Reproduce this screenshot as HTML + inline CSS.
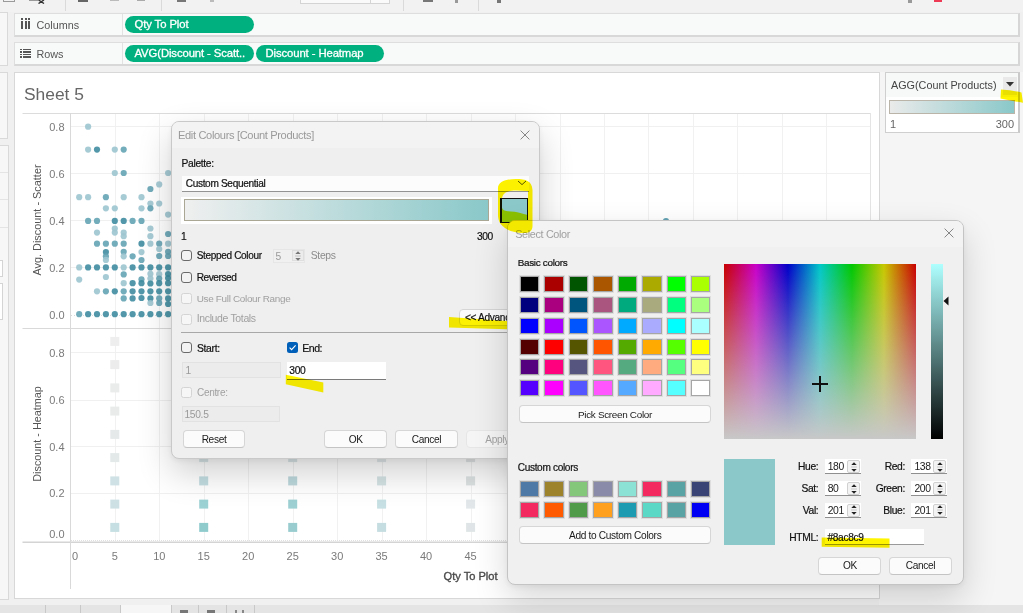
<!DOCTYPE html>
<html><head><meta charset="utf-8"><style>
html,body{margin:0;padding:0;width:1023px;height:613px;overflow:hidden;background:#f0f0f0;position:relative}
div{box-sizing:border-box}
</style></head><body>
<div style="position:absolute;left:0px;top:0px;width:1023px;height:12px;background:#f2f2f2"></div><div style="position:absolute;left:65px;top:0px;width:1px;height:11px;background:#dadada"></div><div style="position:absolute;left:161px;top:0px;width:1px;height:11px;background:#dadada"></div><div style="position:absolute;left:403px;top:0px;width:1px;height:11px;background:#dadada"></div><div style="position:absolute;left:478px;top:0px;width:1px;height:11px;background:#dadada"></div><div style="position:absolute;left:300px;top:0px;width:90px;height:4px;border:1px solid #d4d4d4;border-top:none;background:#fafafa;box-sizing:border-box"></div><div style="position:absolute;left:370px;top:0px;width:1px;height:4px;background:#d4d4d4"></div><div style="position:absolute;left:3px;top:0px;width:12px;height:2px;border:1px solid #9a9a9a;border-top:none;box-sizing:border-box"></div><div style="position:absolute;left:29px;top:0px;width:9px;height:1px;background:#999"></div><svg style="position:absolute;left:38px;top:0" width="7" height="4"><path d="M0.5 0L6 3.5M6 0L0.5 3.5" stroke="#333" stroke-width="1.4"/></svg><div style="position:absolute;left:78px;top:0px;width:10px;height:2px;background:#666"></div><div style="position:absolute;left:110px;top:0px;width:9px;height:1px;background:#bbb"></div><div style="position:absolute;left:137px;top:0px;width:8px;height:1px;background:#aaa"></div><div style="position:absolute;left:177px;top:0px;width:9px;height:2px;background:#777"></div><div style="position:absolute;left:210px;top:0px;width:4px;height:2px;background:#bbb"></div><div style="position:absolute;left:908px;top:0px;width:4px;height:3px;background:#999"></div><div style="position:absolute;left:934px;top:0px;width:8px;height:2px;background:#ef3a55"></div><div style="position:absolute;left:423px;top:0px;width:10px;height:2px;background:#777"></div><div style="position:absolute;left:455px;top:0px;width:3px;height:3px;background:#999"></div><div style="position:absolute;left:497px;top:0px;width:4px;height:3px;background:#777"></div><div style="position:absolute;left:0px;top:12px;width:1023px;height:60px;background:#f0f0f0"></div><div style="position:absolute;left:0px;top:12px;width:8px;height:54px;background:#f7f7f7;border:1px solid #d9d9d9;border-left:none;box-sizing:border-box"></div><div style="position:absolute;left:0px;top:72px;width:8px;height:67px;background:#f7f7f7;border:1px solid #d9d9d9;border-left:none;box-sizing:border-box"></div><div style="position:absolute;left:0px;top:145px;width:8.5px;height:455px;background:#f7f7f7;border:1px solid #d9d9d9;border-left:none;box-sizing:border-box"></div><div style="position:absolute;left:0px;top:172px;width:8px;height:1px;background:#e4e4e4"></div><div style="position:absolute;left:0px;top:199px;width:8px;height:1px;background:#e4e4e4"></div><div style="position:absolute;left:0px;top:227px;width:8px;height:1px;background:#e4e4e4"></div><div style="position:absolute;left:0px;top:260px;width:3px;height:17px;background:#fff;border:1px solid #d4d4d4;border-left:none;box-sizing:border-box"></div><div style="position:absolute;left:0px;top:283px;width:3px;height:37px;background:#fff;border:1px solid #d4d4d4;border-left:none;box-sizing:border-box"></div><div style="position:absolute;left:14px;top:13px;width:1005.5px;height:24px;background:#f8f9f9;border:1px solid #dedede;border-right:2px solid #d6d6d6;border-bottom:2px solid #d8d8d8;box-sizing:border-box"></div><div style="position:absolute;left:122px;top:14px;width:1px;height:21px;background:#e2e2e2"></div><div style="position:absolute;left:36.5px;top:18.8px;white-space:nowrap;font-family:'Liberation Sans', sans-serif;font-size:10.8px;color:#555;line-height:12px">Columns</div><div style="position:absolute;left:14px;top:42px;width:1005.5px;height:24px;background:#f8f9f9;border:1px solid #dedede;border-right:2px solid #d6d6d6;border-bottom:2px solid #d8d8d8;box-sizing:border-box"></div><div style="position:absolute;left:122px;top:43px;width:1px;height:21px;background:#e2e2e2"></div><div style="position:absolute;left:36.5px;top:47.8px;white-space:nowrap;font-family:'Liberation Sans', sans-serif;font-size:10.8px;color:#555;line-height:12px">Rows</div><div style="position:absolute;left:21px;top:18px;width:2px;height:2px;background:#555"></div><div style="position:absolute;left:21px;top:21px;width:2px;height:8px;background:#555"></div><div style="position:absolute;left:24.5px;top:18px;width:2px;height:2px;background:#555"></div><div style="position:absolute;left:24.5px;top:21px;width:2px;height:8px;background:#555"></div><div style="position:absolute;left:28px;top:18px;width:2px;height:2px;background:#555"></div><div style="position:absolute;left:28px;top:21px;width:2px;height:8px;background:#555"></div><div style="position:absolute;left:20px;top:48.5px;width:2px;height:1.6px;background:#555"></div><div style="position:absolute;left:23px;top:48.5px;width:8px;height:1.6px;background:#555"></div><div style="position:absolute;left:20px;top:51px;width:2px;height:1.6px;background:#555"></div><div style="position:absolute;left:23px;top:51px;width:8px;height:1.6px;background:#555"></div><div style="position:absolute;left:20px;top:53.5px;width:2px;height:1.6px;background:#555"></div><div style="position:absolute;left:23px;top:53.5px;width:8px;height:1.6px;background:#555"></div><div style="position:absolute;left:20px;top:56px;width:2px;height:1.6px;background:#555"></div><div style="position:absolute;left:23px;top:56px;width:8px;height:1.6px;background:#555"></div><div style="position:absolute;left:125px;top:16px;width:129px;height:17px;border-radius:9px;background:#00b07e;color:#fff;font-family:'Liberation Sans', sans-serif;font-size:11.3px;letter-spacing:-0.1px;-webkit-text-stroke:0.3px #fff;line-height:17px;padding-left:9.5px;box-sizing:border-box;white-space:nowrap">Qty To Plot</div><div style="position:absolute;left:125px;top:45px;width:129px;height:17px;border-radius:9px;background:#00b07e;color:#fff;font-family:'Liberation Sans', sans-serif;font-size:11.3px;letter-spacing:-0.1px;-webkit-text-stroke:0.3px #fff;line-height:17px;padding-left:9.5px;box-sizing:border-box;white-space:nowrap">AVG(Discount - Scatt..</div><div style="position:absolute;left:256px;top:45px;width:128px;height:17px;border-radius:9px;background:#00b07e;color:#fff;font-family:'Liberation Sans', sans-serif;font-size:11.3px;letter-spacing:-0.1px;-webkit-text-stroke:0.3px #fff;line-height:17px;padding-left:9.5px;box-sizing:border-box;white-space:nowrap">Discount - Heatmap</div><div style="position:absolute;left:879px;top:72px;width:144px;height:533px;background:#f5f5f5"></div><div style="position:absolute;left:14px;top:72px;width:866px;height:527px;background:#fff;border:1px solid #d8d8d8;box-sizing:border-box"></div><div style="position:absolute;left:885px;top:72px;width:134.5px;height:61px;background:#fff;border:1px solid #cfcfcf;border-right:2px solid #cacaca;box-sizing:border-box"></div><div style="position:absolute;left:886px;top:73px;width:132px;height:24px;background:#f7f8f8"></div><div style="position:absolute;left:891px;top:79px;white-space:nowrap;font-family:'Liberation Sans', sans-serif;font-size:10.8px;color:#444;line-height:12px">AGG(Count Products)</div><div style="position:absolute;left:1003px;top:77px;width:14px;height:18px;background:#e9e9e9"></div><svg style="position:absolute;left:1006px;top:82px" width="8" height="5"><path d="M0 0H8L4 4.5Z" fill="#333"/></svg><div style="position:absolute;left:889px;top:100px;width:126px;height:14px;background:linear-gradient(90deg,#eaeaea,#8ac8c9);border:1px solid #b9b3a8;box-sizing:border-box"></div><div style="position:absolute;left:890px;top:118px;white-space:nowrap;font-family:'Liberation Sans', sans-serif;font-size:11px;color:#666;line-height:12px">1</div><div style="position:absolute;left:990px;top:118px;white-space:nowrap;font-family:'Liberation Sans', sans-serif;font-size:11px;color:#666;line-height:12px;width:24px;text-align:right">300</div><div style="position:absolute;left:0px;top:605px;width:1023px;height:8px;background:#e4e4e4"></div><div style="position:absolute;left:120px;top:605px;width:51px;height:8px;background:#f6f6f6"></div><div style="position:absolute;left:180px;top:610px;width:8px;height:3px;background:#777"></div><div style="position:absolute;left:207px;top:610px;width:8px;height:3px;background:#777"></div><div style="position:absolute;left:235px;top:610px;width:2px;height:3px;background:#888"></div><div style="position:absolute;left:242px;top:610px;width:2px;height:3px;background:#888"></div><div style="position:absolute;left:45px;top:605px;width:1px;height:8px;background:#c8c8c8"></div><div style="position:absolute;left:80px;top:605px;width:1px;height:8px;background:#c8c8c8"></div><div style="position:absolute;left:120px;top:605px;width:1px;height:8px;background:#c8c8c8"></div><div style="position:absolute;left:171px;top:605px;width:1px;height:8px;background:#c8c8c8"></div><div style="position:absolute;left:198px;top:605px;width:1px;height:8px;background:#c8c8c8"></div><div style="position:absolute;left:226px;top:605px;width:1px;height:8px;background:#c8c8c8"></div><div style="position:absolute;left:254px;top:605px;width:1px;height:8px;background:#c8c8c8"></div><div style="position:absolute;left:24px;top:84px;white-space:nowrap;font-family:'Liberation Sans', sans-serif;font-size:17.4px;color:#666;line-height:20px">Sheet 5</div><svg style="position:absolute;left:0;top:0" width="1023" height="613"><rect x="22.5" y="113" width="848" height="1" fill="#dcdcdc"/><line x1="115.5" y1="114" x2="115.5" y2="541" stroke="#f1f1f1" stroke-width="1"/><line x1="159.5" y1="114" x2="159.5" y2="541" stroke="#f1f1f1" stroke-width="1"/><line x1="204.5" y1="114" x2="204.5" y2="541" stroke="#f1f1f1" stroke-width="1"/><line x1="248.5" y1="114" x2="248.5" y2="541" stroke="#f1f1f1" stroke-width="1"/><line x1="293.5" y1="114" x2="293.5" y2="541" stroke="#f1f1f1" stroke-width="1"/><line x1="337.5" y1="114" x2="337.5" y2="541" stroke="#f1f1f1" stroke-width="1"/><line x1="382.5" y1="114" x2="382.5" y2="541" stroke="#f1f1f1" stroke-width="1"/><line x1="426.5" y1="114" x2="426.5" y2="541" stroke="#f1f1f1" stroke-width="1"/><line x1="471.5" y1="114" x2="471.5" y2="541" stroke="#f1f1f1" stroke-width="1"/><line x1="515.5" y1="114" x2="515.5" y2="541" stroke="#f1f1f1" stroke-width="1"/><line x1="560.5" y1="114" x2="560.5" y2="541" stroke="#f1f1f1" stroke-width="1"/><line x1="604.5" y1="114" x2="604.5" y2="541" stroke="#f1f1f1" stroke-width="1"/><line x1="648.5" y1="114" x2="648.5" y2="541" stroke="#f1f1f1" stroke-width="1"/><line x1="693.5" y1="114" x2="693.5" y2="541" stroke="#f1f1f1" stroke-width="1"/><line x1="737.5" y1="114" x2="737.5" y2="541" stroke="#f1f1f1" stroke-width="1"/><line x1="782.5" y1="114" x2="782.5" y2="541" stroke="#f1f1f1" stroke-width="1"/><line x1="826.5" y1="114" x2="826.5" y2="541" stroke="#f1f1f1" stroke-width="1"/><line x1="71" y1="126.5" x2="870" y2="126.5" stroke="#f0f0f0" stroke-width="1"/><line x1="71" y1="173.5" x2="870" y2="173.5" stroke="#f0f0f0" stroke-width="1"/><line x1="71" y1="220.5" x2="870" y2="220.5" stroke="#f0f0f0" stroke-width="1"/><line x1="71" y1="267.5" x2="870" y2="267.5" stroke="#f0f0f0" stroke-width="1"/><line x1="71" y1="315.5" x2="870" y2="315.5" stroke="#d8d8d8" stroke-width="1" stroke-dasharray="1 2"/><line x1="71" y1="352.5" x2="870" y2="352.5" stroke="#f0f0f0" stroke-width="1"/><line x1="71" y1="400.5" x2="870" y2="400.5" stroke="#f0f0f0" stroke-width="1"/><line x1="71" y1="446.5" x2="870" y2="446.5" stroke="#f0f0f0" stroke-width="1"/><line x1="71" y1="493.5" x2="870" y2="493.5" stroke="#f0f0f0" stroke-width="1"/><rect x="870" y="113" width="1" height="429" fill="#e4e4e4"/><rect x="22.5" y="328" width="848" height="1" fill="#d9d9d9"/><rect x="22.5" y="541.5" width="848" height="1.5" fill="#d4d4d4"/><line x1="71" y1="540.5" x2="870" y2="540.5" stroke="#e0e0e0" stroke-width="1" stroke-dasharray="1 1"/><rect x="70" y="113" width="1" height="476" fill="#d9d9d9"/><rect x="110.3" y="336.9" width="9" height="9" fill="#eeeeee"/><rect x="110.3" y="360.1" width="9" height="9" fill="#ececec"/><rect x="110.3" y="383.4" width="9" height="9" fill="#eaeceb"/><rect x="110.3" y="406.6" width="9" height="9" fill="#e9ebeb"/><rect x="110.3" y="429.9" width="9" height="9" fill="#e5e9ea"/><rect x="110.3" y="453.1" width="9" height="9" fill="#e3e8e9"/><rect x="110.3" y="476.4" width="9" height="9" fill="#cfe1e5"/><rect x="110.3" y="499.6" width="9" height="9" fill="#cde1e5"/><rect x="110.3" y="522.9" width="9" height="9" fill="#c5dfe2"/><rect x="199.2" y="453.1" width="9" height="9" fill="#d8e6e8"/><rect x="199.2" y="476.4" width="9" height="9" fill="#c2dde1"/><rect x="199.2" y="499.6" width="9" height="9" fill="#9dd2d4"/><rect x="199.2" y="522.9" width="9" height="9" fill="#8fcbcc"/><rect x="288.2" y="453.1" width="9" height="9" fill="#d9e4e7"/><rect x="288.2" y="476.4" width="9" height="9" fill="#bcd8dc"/><rect x="288.2" y="499.6" width="9" height="9" fill="#9dd0d3"/><rect x="288.2" y="522.9" width="9" height="9" fill="#98cccf"/><rect x="377.1" y="453.1" width="9" height="9" fill="#e2e9ea"/><rect x="377.1" y="476.4" width="9" height="9" fill="#d4e3e5"/><rect x="377.1" y="499.6" width="9" height="9" fill="#c6e0e3"/><rect x="377.1" y="522.9" width="9" height="9" fill="#c5dde0"/><rect x="466.1" y="453.1" width="9" height="9" fill="#e3e6e7"/><rect x="466.1" y="476.4" width="9" height="9" fill="#dde2e3"/><rect x="466.1" y="499.6" width="9" height="9" fill="#e2e8e9"/><rect x="466.1" y="522.9" width="9" height="9" fill="#dfe5e6"/><circle cx="88.1" cy="126.7" r="3.1" fill="#9dc5d0" fill-opacity="0.9"/><circle cx="88.1" cy="149.6" r="3.1" fill="#9dc5d0" fill-opacity="0.9"/><circle cx="97.0" cy="149.6" r="3.1" fill="#3f8da1" fill-opacity="0.9"/><circle cx="114.8" cy="149.6" r="3.1" fill="#9dc5d0" fill-opacity="0.9"/><circle cx="123.7" cy="149.6" r="3.1" fill="#64a3b4" fill-opacity="0.9"/><circle cx="114.8" cy="173" r="3.1" fill="#9dc5d0" fill-opacity="0.9"/><circle cx="123.7" cy="173" r="3.1" fill="#64a3b4" fill-opacity="0.9"/><circle cx="168.1" cy="173" r="3.1" fill="#9dc5d0" fill-opacity="0.9"/><circle cx="159.2" cy="184.4" r="3.1" fill="#9dc5d0" fill-opacity="0.9"/><circle cx="150.4" cy="189" r="3.1" fill="#64a3b4" fill-opacity="0.9"/><circle cx="79.2" cy="197.2" r="3.1" fill="#9dc5d0" fill-opacity="0.9"/><circle cx="88.1" cy="197.2" r="3.1" fill="#9dc5d0" fill-opacity="0.9"/><circle cx="105.9" cy="197.2" r="3.1" fill="#64a3b4" fill-opacity="0.9"/><circle cx="123.7" cy="197.2" r="3.1" fill="#9dc5d0" fill-opacity="0.9"/><circle cx="141.5" cy="197.2" r="3.1" fill="#9dc5d0" fill-opacity="0.9"/><circle cx="150.4" cy="203.5" r="3.1" fill="#9dc5d0" fill-opacity="0.9"/><circle cx="159.2" cy="203.5" r="3.1" fill="#9dc5d0" fill-opacity="0.9"/><circle cx="105.9" cy="208.3" r="3.1" fill="#9dc5d0" fill-opacity="0.9"/><circle cx="114.8" cy="208.3" r="3.1" fill="#9dc5d0" fill-opacity="0.9"/><circle cx="141.5" cy="208.3" r="3.1" fill="#9dc5d0" fill-opacity="0.9"/><circle cx="150.4" cy="208.3" r="3.1" fill="#64a3b4" fill-opacity="0.9"/><circle cx="168.1" cy="214.6" r="3.1" fill="#9dc5d0" fill-opacity="0.9"/><circle cx="88.1" cy="220.9" r="3.1" fill="#64a3b4" fill-opacity="0.9"/><circle cx="97.0" cy="220.9" r="3.1" fill="#64a3b4" fill-opacity="0.9"/><circle cx="114.8" cy="220.9" r="3.1" fill="#3f8da1" fill-opacity="0.9"/><circle cx="123.7" cy="220.9" r="3.1" fill="#3f8da1" fill-opacity="0.9"/><circle cx="132.6" cy="220.9" r="3.1" fill="#64a3b4" fill-opacity="0.9"/><circle cx="141.5" cy="220.9" r="3.1" fill="#64a3b4" fill-opacity="0.9"/><circle cx="114.8" cy="228.5" r="3.1" fill="#9dc5d0" fill-opacity="0.9"/><circle cx="150.4" cy="228.5" r="3.1" fill="#9dc5d0" fill-opacity="0.9"/><circle cx="97.0" cy="232.6" r="3.1" fill="#9dc5d0" fill-opacity="0.9"/><circle cx="114.8" cy="232.6" r="3.1" fill="#9dc5d0" fill-opacity="0.9"/><circle cx="123.7" cy="232.6" r="3.1" fill="#9dc5d0" fill-opacity="0.9"/><circle cx="123.7" cy="236.2" r="3.1" fill="#9dc5d0" fill-opacity="0.9"/><circle cx="150.4" cy="236.2" r="3.1" fill="#9dc5d0" fill-opacity="0.9"/><circle cx="168.1" cy="234" r="3.1" fill="#64a3b4" fill-opacity="0.9"/><circle cx="97.0" cy="243.7" r="3.1" fill="#64a3b4" fill-opacity="0.9"/><circle cx="105.9" cy="243.7" r="3.1" fill="#64a3b4" fill-opacity="0.9"/><circle cx="114.8" cy="243.7" r="3.1" fill="#64a3b4" fill-opacity="0.9"/><circle cx="123.7" cy="243.7" r="3.1" fill="#64a3b4" fill-opacity="0.9"/><circle cx="141.5" cy="243.7" r="3.1" fill="#3f8da1" fill-opacity="0.9"/><circle cx="150.4" cy="243.7" r="3.1" fill="#9dc5d0" fill-opacity="0.9"/><circle cx="159.2" cy="243.7" r="3.1" fill="#64a3b4" fill-opacity="0.9"/><circle cx="168.1" cy="243.7" r="3.1" fill="#9dc5d0" fill-opacity="0.9"/><circle cx="159.2" cy="249" r="3.1" fill="#9dc5d0" fill-opacity="0.9"/><circle cx="123.7" cy="251.8" r="3.1" fill="#64a3b4" fill-opacity="0.9"/><circle cx="159.2" cy="256" r="3.1" fill="#64a3b4" fill-opacity="0.9"/><circle cx="168.1" cy="251.8" r="3.1" fill="#64a3b4" fill-opacity="0.9"/><circle cx="168.1" cy="256" r="3.1" fill="#64a3b4" fill-opacity="0.9"/><circle cx="105.9" cy="252" r="3.1" fill="#3f8da1" fill-opacity="0.9"/><circle cx="105.9" cy="256.3" r="3.1" fill="#64a3b4" fill-opacity="0.9"/><circle cx="123.7" cy="256.3" r="3.1" fill="#9dc5d0" fill-opacity="0.9"/><circle cx="132.6" cy="256.3" r="3.1" fill="#64a3b4" fill-opacity="0.9"/><circle cx="141.5" cy="252.1" r="3.1" fill="#9dc5d0" fill-opacity="0.9"/><circle cx="105.9" cy="259.9" r="3.1" fill="#9dc5d0" fill-opacity="0.9"/><circle cx="141.5" cy="260" r="3.1" fill="#64a3b4" fill-opacity="0.9"/><circle cx="79.2" cy="267.4" r="3.1" fill="#9dc5d0" fill-opacity="0.9"/><circle cx="88.1" cy="267.4" r="3.1" fill="#3f8da1" fill-opacity="0.9"/><circle cx="97.0" cy="267.4" r="3.1" fill="#3f8da1" fill-opacity="0.9"/><circle cx="105.9" cy="267.4" r="3.1" fill="#3f8da1" fill-opacity="0.9"/><circle cx="114.8" cy="267.4" r="3.1" fill="#3f8da1" fill-opacity="0.9"/><circle cx="123.7" cy="267.4" r="3.1" fill="#9dc5d0" fill-opacity="0.9"/><circle cx="132.6" cy="267.4" r="3.1" fill="#3f8da1" fill-opacity="0.9"/><circle cx="141.5" cy="267.4" r="3.1" fill="#3f8da1" fill-opacity="0.9"/><circle cx="150.4" cy="267.4" r="3.1" fill="#3f8da1" fill-opacity="0.9"/><circle cx="159.2" cy="267.4" r="3.1" fill="#3f8da1" fill-opacity="0.9"/><circle cx="168.1" cy="267.4" r="3.1" fill="#3f8da1" fill-opacity="0.9"/><circle cx="123.7" cy="274.4" r="3.1" fill="#64a3b4" fill-opacity="0.9"/><circle cx="150.4" cy="273.8" r="3.1" fill="#9dc5d0" fill-opacity="0.9"/><circle cx="159.2" cy="274.2" r="3.1" fill="#9dc5d0" fill-opacity="0.9"/><circle cx="168.1" cy="274" r="3.1" fill="#3f8da1" fill-opacity="0.9"/><circle cx="105.9" cy="277" r="3.1" fill="#9dc5d0" fill-opacity="0.9"/><circle cx="150.4" cy="278.5" r="3.1" fill="#9dc5d0" fill-opacity="0.9"/><circle cx="159.2" cy="278.5" r="3.1" fill="#64a3b4" fill-opacity="0.9"/><circle cx="168.1" cy="278" r="3.1" fill="#3f8da1" fill-opacity="0.9"/><circle cx="79.2" cy="279.6" r="3.1" fill="#9dc5d0" fill-opacity="0.9"/><circle cx="141.5" cy="279.3" r="3.1" fill="#64a3b4" fill-opacity="0.9"/><circle cx="123.7" cy="283.2" r="3.1" fill="#9dc5d0" fill-opacity="0.9"/><circle cx="132.6" cy="283.2" r="3.1" fill="#3f8da1" fill-opacity="0.9"/><circle cx="141.5" cy="283.2" r="3.1" fill="#3f8da1" fill-opacity="0.9"/><circle cx="150.4" cy="283.5" r="3.1" fill="#3f8da1" fill-opacity="0.9"/><circle cx="159.2" cy="283.2" r="3.1" fill="#3f8da1" fill-opacity="0.9"/><circle cx="168.1" cy="283.2" r="3.1" fill="#3f8da1" fill-opacity="0.9"/><circle cx="97.0" cy="291.3" r="3.1" fill="#9dc5d0" fill-opacity="0.9"/><circle cx="105.9" cy="291.3" r="3.1" fill="#64a3b4" fill-opacity="0.9"/><circle cx="114.8" cy="291.3" r="3.1" fill="#3f8da1" fill-opacity="0.9"/><circle cx="123.7" cy="291.3" r="3.1" fill="#64a3b4" fill-opacity="0.9"/><circle cx="132.6" cy="291.3" r="3.1" fill="#3f8da1" fill-opacity="0.9"/><circle cx="141.5" cy="291.3" r="3.1" fill="#3f8da1" fill-opacity="0.9"/><circle cx="150.4" cy="291.3" r="3.1" fill="#3f8da1" fill-opacity="0.9"/><circle cx="159.2" cy="291.3" r="3.1" fill="#3f8da1" fill-opacity="0.9"/><circle cx="168.1" cy="291.3" r="3.1" fill="#3f8da1" fill-opacity="0.9"/><circle cx="123.7" cy="298.4" r="3.1" fill="#64a3b4" fill-opacity="0.9"/><circle cx="132.6" cy="298.4" r="3.1" fill="#3f8da1" fill-opacity="0.9"/><circle cx="141.5" cy="298" r="3.1" fill="#3f8da1" fill-opacity="0.9"/><circle cx="150.4" cy="298.4" r="3.1" fill="#3f8da1" fill-opacity="0.9"/><circle cx="159.2" cy="298.4" r="3.1" fill="#64a3b4" fill-opacity="0.9"/><circle cx="168.1" cy="298.4" r="3.1" fill="#3f8da1" fill-opacity="0.9"/><circle cx="150.4" cy="303" r="3.1" fill="#9dc5d0" fill-opacity="0.9"/><circle cx="159.2" cy="303" r="3.1" fill="#64a3b4" fill-opacity="0.9"/><circle cx="168.1" cy="304" r="3.1" fill="#3f8da1" fill-opacity="0.9"/><circle cx="79.2" cy="314.2" r="3.1" fill="#64a3b4" fill-opacity="0.9"/><circle cx="88.1" cy="314.2" r="3.1" fill="#3f8da1" fill-opacity="0.9"/><circle cx="97.0" cy="314.2" r="3.1" fill="#3f8da1" fill-opacity="0.9"/><circle cx="105.9" cy="314.2" r="3.1" fill="#3f8da1" fill-opacity="0.9"/><circle cx="114.8" cy="314.2" r="3.1" fill="#3f8da1" fill-opacity="0.9"/><circle cx="123.7" cy="314.2" r="3.1" fill="#3f8da1" fill-opacity="0.9"/><circle cx="132.6" cy="314.2" r="3.1" fill="#3f8da1" fill-opacity="0.9"/><circle cx="141.5" cy="314.2" r="3.1" fill="#3f8da1" fill-opacity="0.9"/><circle cx="150.4" cy="314.2" r="3.1" fill="#3f8da1" fill-opacity="0.9"/><circle cx="159.2" cy="314.2" r="3.1" fill="#3f8da1" fill-opacity="0.9"/><circle cx="168.1" cy="314.2" r="3.1" fill="#3f8da1" fill-opacity="0.9"/><circle cx="666" cy="221" r="3.1" fill="#64a3b4"/></svg><div style="position:absolute;left:34.5px;top:121px;white-space:nowrap;font-family:'Liberation Sans', sans-serif;font-size:11px;color:#7a7a7a;line-height:12px;width:30px;text-align:right">0.8</div><div style="position:absolute;left:34.5px;top:168px;white-space:nowrap;font-family:'Liberation Sans', sans-serif;font-size:11px;color:#7a7a7a;line-height:12px;width:30px;text-align:right">0.6</div><div style="position:absolute;left:34.5px;top:215px;white-space:nowrap;font-family:'Liberation Sans', sans-serif;font-size:11px;color:#7a7a7a;line-height:12px;width:30px;text-align:right">0.4</div><div style="position:absolute;left:34.5px;top:262px;white-space:nowrap;font-family:'Liberation Sans', sans-serif;font-size:11px;color:#7a7a7a;line-height:12px;width:30px;text-align:right">0.2</div><div style="position:absolute;left:34.5px;top:309px;white-space:nowrap;font-family:'Liberation Sans', sans-serif;font-size:11px;color:#7a7a7a;line-height:12px;width:30px;text-align:right">0.0</div><div style="position:absolute;left:34.5px;top:347px;white-space:nowrap;font-family:'Liberation Sans', sans-serif;font-size:11px;color:#7a7a7a;line-height:12px;width:30px;text-align:right">0.8</div><div style="position:absolute;left:34.5px;top:394px;white-space:nowrap;font-family:'Liberation Sans', sans-serif;font-size:11px;color:#7a7a7a;line-height:12px;width:30px;text-align:right">0.6</div><div style="position:absolute;left:34.5px;top:441px;white-space:nowrap;font-family:'Liberation Sans', sans-serif;font-size:11px;color:#7a7a7a;line-height:12px;width:30px;text-align:right">0.4</div><div style="position:absolute;left:34.5px;top:487px;white-space:nowrap;font-family:'Liberation Sans', sans-serif;font-size:11px;color:#7a7a7a;line-height:12px;width:30px;text-align:right">0.2</div><div style="position:absolute;left:34.5px;top:528px;white-space:nowrap;font-family:'Liberation Sans', sans-serif;font-size:11px;color:#7a7a7a;line-height:12px;width:30px;text-align:right">0.0</div><div style="position:absolute;left:72px;top:550px;white-space:nowrap;font-family:'Liberation Sans', sans-serif;font-size:11px;color:#7a7a7a;line-height:12px">0</div><div style="position:absolute;left:99.77499999999999px;top:550px;white-space:nowrap;font-family:'Liberation Sans', sans-serif;font-size:11px;color:#7a7a7a;line-height:12px;width:30px;text-align:center">5</div><div style="position:absolute;left:144.25px;top:550px;white-space:nowrap;font-family:'Liberation Sans', sans-serif;font-size:11px;color:#7a7a7a;line-height:12px;width:30px;text-align:center">10</div><div style="position:absolute;left:188.72499999999997px;top:550px;white-space:nowrap;font-family:'Liberation Sans', sans-serif;font-size:11px;color:#7a7a7a;line-height:12px;width:30px;text-align:center">15</div><div style="position:absolute;left:233.2px;top:550px;white-space:nowrap;font-family:'Liberation Sans', sans-serif;font-size:11px;color:#7a7a7a;line-height:12px;width:30px;text-align:center">20</div><div style="position:absolute;left:277.675px;top:550px;white-space:nowrap;font-family:'Liberation Sans', sans-serif;font-size:11px;color:#7a7a7a;line-height:12px;width:30px;text-align:center">25</div><div style="position:absolute;left:322.15px;top:550px;white-space:nowrap;font-family:'Liberation Sans', sans-serif;font-size:11px;color:#7a7a7a;line-height:12px;width:30px;text-align:center">30</div><div style="position:absolute;left:366.625px;top:550px;white-space:nowrap;font-family:'Liberation Sans', sans-serif;font-size:11px;color:#7a7a7a;line-height:12px;width:30px;text-align:center">35</div><div style="position:absolute;left:411.09999999999997px;top:550px;white-space:nowrap;font-family:'Liberation Sans', sans-serif;font-size:11px;color:#7a7a7a;line-height:12px;width:30px;text-align:center">40</div><div style="position:absolute;left:455.575px;top:550px;white-space:nowrap;font-family:'Liberation Sans', sans-serif;font-size:11px;color:#7a7a7a;line-height:12px;width:30px;text-align:center">45</div><div style="position:absolute;left:500.04999999999995px;top:550px;white-space:nowrap;font-family:'Liberation Sans', sans-serif;font-size:11px;color:#7a7a7a;line-height:12px;width:30px;text-align:center">50</div><div style="position:absolute;left:544.525px;top:550px;white-space:nowrap;font-family:'Liberation Sans', sans-serif;font-size:11px;color:#7a7a7a;line-height:12px;width:30px;text-align:center">55</div><div style="position:absolute;left:588.9999999999999px;top:550px;white-space:nowrap;font-family:'Liberation Sans', sans-serif;font-size:11px;color:#7a7a7a;line-height:12px;width:30px;text-align:center">60</div><div style="position:absolute;left:633.4749999999999px;top:550px;white-space:nowrap;font-family:'Liberation Sans', sans-serif;font-size:11px;color:#7a7a7a;line-height:12px;width:30px;text-align:center">65</div><div style="position:absolute;left:677.9499999999999px;top:550px;white-space:nowrap;font-family:'Liberation Sans', sans-serif;font-size:11px;color:#7a7a7a;line-height:12px;width:30px;text-align:center">70</div><div style="position:absolute;left:722.425px;top:550px;white-space:nowrap;font-family:'Liberation Sans', sans-serif;font-size:11px;color:#7a7a7a;line-height:12px;width:30px;text-align:center">75</div><div style="position:absolute;left:766.8999999999999px;top:550px;white-space:nowrap;font-family:'Liberation Sans', sans-serif;font-size:11px;color:#7a7a7a;line-height:12px;width:30px;text-align:center">80</div><div style="position:absolute;left:811.3749999999999px;top:550px;white-space:nowrap;font-family:'Liberation Sans', sans-serif;font-size:11px;color:#7a7a7a;line-height:12px;width:30px;text-align:center">85</div><div style="position:absolute;left:855.8499999999999px;top:550px;white-space:nowrap;font-family:'Liberation Sans', sans-serif;font-size:11px;color:#7a7a7a;line-height:12px;width:30px;text-align:center">90</div><div style="position:absolute;left:443.5px;top:570px;white-space:nowrap;font-family:'Liberation Sans', sans-serif;font-size:11.1px;color:#4a4a4a;-webkit-text-stroke:0.35px #4a4a4a;line-height:13px">Qty To Plot</div><div style="position:absolute;left:37px;top:219.5px;width:0;height:0"><div style="position:absolute;left:-60px;top:-7px;width:120px;text-align:center;transform:rotate(-90deg);font-family:'Liberation Sans', sans-serif;font-size:10.9px;color:#555;line-height:14px;white-space:nowrap">Avg. Discount - Scatter</div></div><div style="position:absolute;left:37px;top:434px;width:0;height:0"><div style="position:absolute;left:-60px;top:-7px;width:120px;text-align:center;transform:rotate(-90deg);font-family:'Liberation Sans', sans-serif;font-size:10.8px;color:#555;line-height:14px;white-space:nowrap">Discount - Heatmap</div></div><div style="position:absolute;left:171.00px;top:121.00px;width:369.00px;height:338.00px;box-sizing:border-box;background:#efefef;border:1px solid #c9c9c9;border-radius:8px;box-shadow:0 14px 34px rgba(0,0,0,0.19),0 2px 5px rgba(0,0,0,0.05)"></div><div style="position:absolute;left:172.00px;top:122.00px;width:367.00px;height:26.00px;box-sizing:border-box;background:#f3f3f3;border-radius:7px 7px 0 0"></div><div style="position:absolute;left:178.00px;top:127.75px;white-space:nowrap;font-family:'Liberation Sans', sans-serif;font-size:11.12px;letter-spacing:-0.36px;line-height:14px;color:#9a9a9a;">Edit Colours [Count Products]</div><svg style="position:absolute;left:518.6px;top:128.5px" width="12" height="12"><path d="M1.5999999999999996 1.5999999999999996L10.4 10.4M10.4 1.5999999999999996L1.5999999999999996 10.4" stroke="#858585" stroke-width="1"/></svg><div style="position:absolute;left:181.60px;top:156.94px;white-space:nowrap;font-family:'Liberation Sans', sans-serif;font-size:10.26px;letter-spacing:-0.33px;line-height:13px;color:#111;-webkit-text-stroke:0.2px #111;">Palette:</div><div style="position:absolute;left:182.00px;top:176.00px;width:346.70px;height:16.00px;box-sizing:border-box;background:#fcfcfc;border-bottom:1px solid #939393"></div><div style="position:absolute;left:185.70px;top:176.60px;white-space:nowrap;font-family:'Liberation Sans', sans-serif;font-size:10.10px;letter-spacing:-0.33px;line-height:13px;color:#111;-webkit-text-stroke:0.2px #111;">Custom Sequential</div><svg style="position:absolute;left:517px;top:180px" width="10" height="6"><path d="M1 1L5 4.6L9 1" stroke="#555" stroke-width="1" fill="none"/></svg><div style="position:absolute;left:181.00px;top:196.80px;width:311.00px;height:27.70px;box-sizing:border-box;background:#fff"></div><div style="position:absolute;left:184.30px;top:199.30px;width:304.70px;height:22.00px;box-sizing:border-box;background:linear-gradient(90deg,#efefef 0%,#8ac8c9 100%);border:1.3px solid #aaa795"></div><div style="position:absolute;left:499.90px;top:198.30px;width:28.10px;height:25.20px;box-sizing:border-box;background:#8ac8c9;border:1px solid #111;border-left-width:2px"></div><div style="position:absolute;left:181.00px;top:230.34px;white-space:nowrap;font-family:'Liberation Sans', sans-serif;font-size:10.26px;letter-spacing:-0.33px;line-height:13px;color:#111;-webkit-text-stroke:0.2px #111;">1</div><div style="position:absolute;left:293.00px;top:230.34px;width:200px;text-align:right;white-space:nowrap;font-family:'Liberation Sans', sans-serif;font-size:10.26px;letter-spacing:-0.33px;line-height:13px;color:#111;-webkit-text-stroke:0.2px #111;">300</div><div style="position:absolute;left:181.20px;top:249.70px;width:11.30px;height:11.00px;box-sizing:border-box;border:1px solid #6a6a6a;border-radius:3px;background:#f3f3f3"></div><div style="position:absolute;left:196.70px;top:248.82px;white-space:nowrap;font-family:'Liberation Sans', sans-serif;font-size:10.04px;letter-spacing:-0.33px;line-height:13px;color:#111;-webkit-text-stroke:0.2px #111;">Stepped Colour</div><div style="position:absolute;left:272.60px;top:248.80px;width:32.00px;height:14.60px;box-sizing:border-box;background:#f0f0f0;border:1px solid #e6e6e6"></div><div style="position:absolute;left:275.60px;top:249.64px;white-space:nowrap;font-family:'Liberation Sans', sans-serif;font-size:10.26px;letter-spacing:-0.33px;line-height:13px;color:#9a9a9a;">5</div><div style="position:absolute;left:292.10px;top:249.80px;width:11.50px;height:11.60px;box-sizing:border-box;background:#ececec;border:1px solid #dedede"></div><svg style="position:absolute;left:293.6px;top:249.10000000000002px" width="8" height="14"><path d="M1.3 5L4 2.2L6.7 5Z" fill="#777"/><path d="M1.3 9L4 11.8L6.7 9Z" fill="#777"/><rect x="1" y="6.6" width="6" height="0.8" fill="#bbb"/></svg><div style="position:absolute;left:310.80px;top:248.91px;white-space:nowrap;font-family:'Liberation Sans', sans-serif;font-size:10.37px;letter-spacing:-0.34px;line-height:13px;color:#8c8c8c;">Steps</div><div style="position:absolute;left:181.20px;top:271.70px;width:11.30px;height:11.00px;box-sizing:border-box;border:1px solid #6a6a6a;border-radius:3px;background:#f3f3f3"></div><div style="position:absolute;left:196.70px;top:270.78px;white-space:nowrap;font-family:'Liberation Sans', sans-serif;font-size:10.15px;letter-spacing:-0.33px;line-height:13px;color:#111;-webkit-text-stroke:0.2px #111;letter-spacing:-0.45px">Reversed</div><div style="position:absolute;left:181.20px;top:292.80px;width:11.00px;height:11.00px;box-sizing:border-box;border:1px solid #d4d4d4;border-radius:2.5px;background:#f6f6f6"></div><div style="position:absolute;left:196.70px;top:291.86px;white-space:nowrap;font-family:'Liberation Sans', sans-serif;font-size:9.94px;letter-spacing:-0.32px;line-height:13px;color:#a0a0a0;">Use Full Colour Range</div><div style="position:absolute;left:181.20px;top:313.60px;width:11.00px;height:11.00px;box-sizing:border-box;border:1px solid #d4d4d4;border-radius:2.5px;background:#f6f6f6"></div><div style="position:absolute;left:196.70px;top:311.97px;white-space:nowrap;font-family:'Liberation Sans', sans-serif;font-size:10.48px;letter-spacing:-0.34px;line-height:14px;color:#a0a0a0;">Include Totals</div><div style="position:absolute;left:458.70px;top:308.60px;width:61.30px;height:17.90px;box-sizing:border-box;background:#fbfbfb;border:1px solid #d6d6d6;border-radius:4px"></div><div style="position:absolute;left:465.00px;top:310.98px;white-space:nowrap;font-family:'Liberation Sans', sans-serif;font-size:10.15px;letter-spacing:-0.33px;line-height:13px;color:#111;-webkit-text-stroke:0.2px #111;">&lt;&lt; Advanced</div><div style="position:absolute;left:181.00px;top:332.00px;width:327.00px;height:1.20px;box-sizing:border-box;background:#a8a8a8"></div><div style="position:absolute;left:181.20px;top:342.40px;width:11.30px;height:11.00px;box-sizing:border-box;border:1px solid #6a6a6a;border-radius:3px;background:#f3f3f3"></div><div style="position:absolute;left:197.00px;top:342.11px;white-space:nowrap;font-family:'Liberation Sans', sans-serif;font-size:10.37px;letter-spacing:-0.34px;line-height:13px;color:#111;-webkit-text-stroke:0.2px #111;">Start:</div><div style="position:absolute;left:286.50px;top:342.40px;width:11.00px;height:11.00px;box-sizing:border-box;background:#005fb8;border-radius:2.5px"></div><svg style="position:absolute;left:286.5px;top:342.4px" width="11" height="11"><path d="M2.6 5.6L4.6 7.6L8.6 3.4" stroke="#fff" stroke-width="1.1" fill="none"/></svg><div style="position:absolute;left:302.20px;top:340.73px;white-space:nowrap;font-family:'Liberation Sans', sans-serif;font-size:10.58px;letter-spacing:-0.34px;line-height:14px;color:#111;-webkit-text-stroke:0.2px #111;letter-spacing:-0.5px">End:</div><div style="position:absolute;left:182.40px;top:362.10px;width:98.20px;height:16.20px;box-sizing:border-box;background:#ececec;border:1px solid #e2e2e2"></div><div style="position:absolute;left:185.50px;top:363.54px;white-space:nowrap;font-family:'Liberation Sans', sans-serif;font-size:10.26px;letter-spacing:-0.33px;line-height:13px;color:#9a9a9a;">1</div><div style="position:absolute;left:286.90px;top:362.10px;width:98.90px;height:17.90px;box-sizing:border-box;background:#fff;border-bottom:1px solid #7a7a7a"></div><div style="position:absolute;left:289.30px;top:363.94px;white-space:nowrap;font-family:'Liberation Sans', sans-serif;font-size:10.26px;letter-spacing:-0.33px;line-height:13px;color:#111;-webkit-text-stroke:0.2px #111;">300</div><div style="position:absolute;left:181.20px;top:387.30px;width:11.00px;height:11.00px;box-sizing:border-box;border:1px solid #d4d4d4;border-radius:2.5px;background:#f6f6f6"></div><div style="position:absolute;left:197.00px;top:386.32px;white-space:nowrap;font-family:'Liberation Sans', sans-serif;font-size:10.04px;letter-spacing:-0.33px;line-height:13px;color:#a0a0a0;">Centre:</div><div style="position:absolute;left:182.20px;top:406.20px;width:98.20px;height:16.10px;box-sizing:border-box;background:#ececec;border:1px solid #e2e2e2"></div><div style="position:absolute;left:184.50px;top:407.74px;white-space:nowrap;font-family:'Liberation Sans', sans-serif;font-size:10.26px;letter-spacing:-0.33px;line-height:13px;color:#9a9a9a;">150.5</div><div style="position:absolute;left:182.60px;top:430.40px;width:62.90px;height:17.80px;box-sizing:border-box;background:#fbfbfb;border:1px solid #d6d6d6;border-bottom-color:#c4c4c4;border-radius:4px"></div><div style="position:absolute;left:114.05px;top:432.78px;width:200px;text-align:center;white-space:nowrap;font-family:'Liberation Sans', sans-serif;font-size:10.15px;letter-spacing:-0.33px;line-height:13px;color:#1a1a1a;">Reset</div><div style="position:absolute;left:324.30px;top:430.40px;width:62.70px;height:17.80px;box-sizing:border-box;background:#fbfbfb;border:1px solid #d6d6d6;border-bottom-color:#c4c4c4;border-radius:4px"></div><div style="position:absolute;left:255.65px;top:432.78px;width:200px;text-align:center;white-space:nowrap;font-family:'Liberation Sans', sans-serif;font-size:10.15px;letter-spacing:-0.33px;line-height:13px;color:#1a1a1a;">OK</div><div style="position:absolute;left:394.80px;top:430.40px;width:63.40px;height:17.80px;box-sizing:border-box;background:#fbfbfb;border:1px solid #d6d6d6;border-bottom-color:#c4c4c4;border-radius:4px"></div><div style="position:absolute;left:326.50px;top:432.78px;width:200px;text-align:center;white-space:nowrap;font-family:'Liberation Sans', sans-serif;font-size:10.15px;letter-spacing:-0.33px;line-height:13px;color:#1a1a1a;">Cancel</div><div style="position:absolute;left:465.80px;top:430.40px;width:62.70px;height:17.80px;box-sizing:border-box;background:#f5f5f5;border:1px solid #e6e6e6;border-radius:4px"></div><div style="position:absolute;left:397.15px;top:432.78px;width:200px;text-align:center;white-space:nowrap;font-family:'Liberation Sans', sans-serif;font-size:10.15px;letter-spacing:-0.33px;line-height:13px;color:#a3a3a3;">Apply</div><div style="position:absolute;left:507.00px;top:220.00px;width:457.00px;height:365.00px;box-sizing:border-box;background:#f0f0f0;border:1px solid #c4c4c4;border-radius:8px;box-shadow:0 14px 34px rgba(0,0,0,0.16),0 2px 5px rgba(0,0,0,0.05)"></div><div style="position:absolute;left:508.00px;top:221.00px;width:455.00px;height:26.00px;box-sizing:border-box;background:#f3f3f3;border-radius:7px 7px 0 0"></div><div style="position:absolute;left:515.20px;top:226.84px;white-space:nowrap;font-family:'Liberation Sans', sans-serif;font-size:10.85px;letter-spacing:-0.35px;line-height:14px;color:#a0a0a0;">Select Color</div><svg style="position:absolute;left:942.6px;top:227.4px" width="12" height="12"><path d="M1.5999999999999996 1.5999999999999996L10.4 10.4M10.4 1.5999999999999996L1.5999999999999996 10.4" stroke="#858585" stroke-width="1"/></svg><div style="position:absolute;left:517.70px;top:255.96px;white-space:nowrap;font-family:'Liberation Sans', sans-serif;font-size:9.94px;letter-spacing:-0.32px;line-height:13px;color:#111;-webkit-text-stroke:0.2px #111;">Basic colors</div><div style="position:absolute;left:519.70px;top:276.30px;width:19.50px;height:16.00px;box-sizing:border-box;background:#000000;border:1px solid #a6a6a6;box-shadow:0 0 0 1px #dedede"></div><div style="position:absolute;left:544.30px;top:276.30px;width:19.50px;height:16.00px;box-sizing:border-box;background:#aa0000;border:1px solid #a6a6a6;box-shadow:0 0 0 1px #dedede"></div><div style="position:absolute;left:568.50px;top:276.30px;width:19.50px;height:16.00px;box-sizing:border-box;background:#005500;border:1px solid #a6a6a6;box-shadow:0 0 0 1px #dedede"></div><div style="position:absolute;left:593.10px;top:276.30px;width:19.50px;height:16.00px;box-sizing:border-box;background:#aa5500;border:1px solid #a6a6a6;box-shadow:0 0 0 1px #dedede"></div><div style="position:absolute;left:617.70px;top:276.30px;width:19.50px;height:16.00px;box-sizing:border-box;background:#00aa00;border:1px solid #a6a6a6;box-shadow:0 0 0 1px #dedede"></div><div style="position:absolute;left:642.00px;top:276.30px;width:19.50px;height:16.00px;box-sizing:border-box;background:#aaaa00;border:1px solid #a6a6a6;box-shadow:0 0 0 1px #dedede"></div><div style="position:absolute;left:666.60px;top:276.30px;width:19.50px;height:16.00px;box-sizing:border-box;background:#00ff00;border:1px solid #a6a6a6;box-shadow:0 0 0 1px #dedede"></div><div style="position:absolute;left:690.50px;top:276.30px;width:19.50px;height:16.00px;box-sizing:border-box;background:#aaff00;border:1px solid #a6a6a6;box-shadow:0 0 0 1px #dedede"></div><div style="position:absolute;left:519.70px;top:296.90px;width:19.50px;height:16.00px;box-sizing:border-box;background:#00007f;border:1px solid #a6a6a6;box-shadow:0 0 0 1px #dedede"></div><div style="position:absolute;left:544.30px;top:296.90px;width:19.50px;height:16.00px;box-sizing:border-box;background:#aa007f;border:1px solid #a6a6a6;box-shadow:0 0 0 1px #dedede"></div><div style="position:absolute;left:568.50px;top:296.90px;width:19.50px;height:16.00px;box-sizing:border-box;background:#00557f;border:1px solid #a6a6a6;box-shadow:0 0 0 1px #dedede"></div><div style="position:absolute;left:593.10px;top:296.90px;width:19.50px;height:16.00px;box-sizing:border-box;background:#aa557f;border:1px solid #a6a6a6;box-shadow:0 0 0 1px #dedede"></div><div style="position:absolute;left:617.70px;top:296.90px;width:19.50px;height:16.00px;box-sizing:border-box;background:#00aa7f;border:1px solid #a6a6a6;box-shadow:0 0 0 1px #dedede"></div><div style="position:absolute;left:642.00px;top:296.90px;width:19.50px;height:16.00px;box-sizing:border-box;background:#aaaa7f;border:1px solid #a6a6a6;box-shadow:0 0 0 1px #dedede"></div><div style="position:absolute;left:666.60px;top:296.90px;width:19.50px;height:16.00px;box-sizing:border-box;background:#00ff7f;border:1px solid #a6a6a6;box-shadow:0 0 0 1px #dedede"></div><div style="position:absolute;left:690.50px;top:296.90px;width:19.50px;height:16.00px;box-sizing:border-box;background:#aaff7f;border:1px solid #a6a6a6;box-shadow:0 0 0 1px #dedede"></div><div style="position:absolute;left:519.70px;top:317.80px;width:19.50px;height:16.00px;box-sizing:border-box;background:#0000ff;border:1px solid #a6a6a6;box-shadow:0 0 0 1px #dedede"></div><div style="position:absolute;left:544.30px;top:317.80px;width:19.50px;height:16.00px;box-sizing:border-box;background:#aa00ff;border:1px solid #a6a6a6;box-shadow:0 0 0 1px #dedede"></div><div style="position:absolute;left:568.50px;top:317.80px;width:19.50px;height:16.00px;box-sizing:border-box;background:#0055ff;border:1px solid #a6a6a6;box-shadow:0 0 0 1px #dedede"></div><div style="position:absolute;left:593.10px;top:317.80px;width:19.50px;height:16.00px;box-sizing:border-box;background:#aa55ff;border:1px solid #a6a6a6;box-shadow:0 0 0 1px #dedede"></div><div style="position:absolute;left:617.70px;top:317.80px;width:19.50px;height:16.00px;box-sizing:border-box;background:#00aaff;border:1px solid #a6a6a6;box-shadow:0 0 0 1px #dedede"></div><div style="position:absolute;left:642.00px;top:317.80px;width:19.50px;height:16.00px;box-sizing:border-box;background:#aaaaff;border:1px solid #a6a6a6;box-shadow:0 0 0 1px #dedede"></div><div style="position:absolute;left:666.60px;top:317.80px;width:19.50px;height:16.00px;box-sizing:border-box;background:#00ffff;border:1px solid #a6a6a6;box-shadow:0 0 0 1px #dedede"></div><div style="position:absolute;left:690.50px;top:317.80px;width:19.50px;height:16.00px;box-sizing:border-box;background:#aaffff;border:1px solid #a6a6a6;box-shadow:0 0 0 1px #dedede"></div><div style="position:absolute;left:519.70px;top:338.80px;width:19.50px;height:16.00px;box-sizing:border-box;background:#550000;border:1px solid #a6a6a6;box-shadow:0 0 0 1px #dedede"></div><div style="position:absolute;left:544.30px;top:338.80px;width:19.50px;height:16.00px;box-sizing:border-box;background:#ff0000;border:1px solid #a6a6a6;box-shadow:0 0 0 1px #dedede"></div><div style="position:absolute;left:568.50px;top:338.80px;width:19.50px;height:16.00px;box-sizing:border-box;background:#555500;border:1px solid #a6a6a6;box-shadow:0 0 0 1px #dedede"></div><div style="position:absolute;left:593.10px;top:338.80px;width:19.50px;height:16.00px;box-sizing:border-box;background:#ff5500;border:1px solid #a6a6a6;box-shadow:0 0 0 1px #dedede"></div><div style="position:absolute;left:617.70px;top:338.80px;width:19.50px;height:16.00px;box-sizing:border-box;background:#55aa00;border:1px solid #a6a6a6;box-shadow:0 0 0 1px #dedede"></div><div style="position:absolute;left:642.00px;top:338.80px;width:19.50px;height:16.00px;box-sizing:border-box;background:#ffaa00;border:1px solid #a6a6a6;box-shadow:0 0 0 1px #dedede"></div><div style="position:absolute;left:666.60px;top:338.80px;width:19.50px;height:16.00px;box-sizing:border-box;background:#55ff00;border:1px solid #a6a6a6;box-shadow:0 0 0 1px #dedede"></div><div style="position:absolute;left:690.50px;top:338.80px;width:19.50px;height:16.00px;box-sizing:border-box;background:#ffff00;border:1px solid #a6a6a6;box-shadow:0 0 0 1px #dedede"></div><div style="position:absolute;left:519.70px;top:359.30px;width:19.50px;height:16.00px;box-sizing:border-box;background:#55007f;border:1px solid #a6a6a6;box-shadow:0 0 0 1px #dedede"></div><div style="position:absolute;left:544.30px;top:359.30px;width:19.50px;height:16.00px;box-sizing:border-box;background:#ff007f;border:1px solid #a6a6a6;box-shadow:0 0 0 1px #dedede"></div><div style="position:absolute;left:568.50px;top:359.30px;width:19.50px;height:16.00px;box-sizing:border-box;background:#55557f;border:1px solid #a6a6a6;box-shadow:0 0 0 1px #dedede"></div><div style="position:absolute;left:593.10px;top:359.30px;width:19.50px;height:16.00px;box-sizing:border-box;background:#ff557f;border:1px solid #a6a6a6;box-shadow:0 0 0 1px #dedede"></div><div style="position:absolute;left:617.70px;top:359.30px;width:19.50px;height:16.00px;box-sizing:border-box;background:#55aa7f;border:1px solid #a6a6a6;box-shadow:0 0 0 1px #dedede"></div><div style="position:absolute;left:642.00px;top:359.30px;width:19.50px;height:16.00px;box-sizing:border-box;background:#ffaa7f;border:1px solid #a6a6a6;box-shadow:0 0 0 1px #dedede"></div><div style="position:absolute;left:666.60px;top:359.30px;width:19.50px;height:16.00px;box-sizing:border-box;background:#55ff7f;border:1px solid #a6a6a6;box-shadow:0 0 0 1px #dedede"></div><div style="position:absolute;left:690.50px;top:359.30px;width:19.50px;height:16.00px;box-sizing:border-box;background:#ffff7f;border:1px solid #a6a6a6;box-shadow:0 0 0 1px #dedede"></div><div style="position:absolute;left:519.70px;top:380.30px;width:19.50px;height:16.00px;box-sizing:border-box;background:#5500ff;border:1px solid #a6a6a6;box-shadow:0 0 0 1px #dedede"></div><div style="position:absolute;left:544.30px;top:380.30px;width:19.50px;height:16.00px;box-sizing:border-box;background:#ff00ff;border:1px solid #a6a6a6;box-shadow:0 0 0 1px #dedede"></div><div style="position:absolute;left:568.50px;top:380.30px;width:19.50px;height:16.00px;box-sizing:border-box;background:#5555ff;border:1px solid #a6a6a6;box-shadow:0 0 0 1px #dedede"></div><div style="position:absolute;left:593.10px;top:380.30px;width:19.50px;height:16.00px;box-sizing:border-box;background:#ff55ff;border:1px solid #a6a6a6;box-shadow:0 0 0 1px #dedede"></div><div style="position:absolute;left:617.70px;top:380.30px;width:19.50px;height:16.00px;box-sizing:border-box;background:#55aaff;border:1px solid #a6a6a6;box-shadow:0 0 0 1px #dedede"></div><div style="position:absolute;left:642.00px;top:380.30px;width:19.50px;height:16.00px;box-sizing:border-box;background:#ffaaff;border:1px solid #a6a6a6;box-shadow:0 0 0 1px #dedede"></div><div style="position:absolute;left:666.60px;top:380.30px;width:19.50px;height:16.00px;box-sizing:border-box;background:#55ffff;border:1px solid #a6a6a6;box-shadow:0 0 0 1px #dedede"></div><div style="position:absolute;left:690.50px;top:380.30px;width:19.50px;height:16.00px;box-sizing:border-box;background:#ffffff;border:1px solid #a6a6a6;box-shadow:0 0 0 1px #dedede"></div><div style="position:absolute;left:518.60px;top:404.90px;width:192.80px;height:18.30px;box-sizing:border-box;background:#fbfbfb;border:1px solid #d6d6d6;border-bottom-color:#c4c4c4;border-radius:4px"></div><div style="position:absolute;left:515.00px;top:407.61px;width:200px;text-align:center;white-space:nowrap;font-family:'Liberation Sans', sans-serif;font-size:9.94px;letter-spacing:-0.32px;line-height:13px;color:#1a1a1a;">Pick Screen Color</div><div style="position:absolute;left:724.00px;top:264.20px;width:191.60px;height:174.40px;box-sizing:border-box;background:linear-gradient(180deg,rgba(200,200,200,0) 0%,rgba(200,200,200,1) 100%),linear-gradient(90deg,#c80000 0%,#c800c8 16.67%,#0000c8 33.33%,#00c8c8 50%,#00c800 66.67%,#c8c800 83.33%,#c80000 100%)"></div><svg style="position:absolute;left:811px;top:375px" width="18" height="18"><path d="M9 1V17M1 9H17" stroke="#111" stroke-width="2"/></svg><div style="position:absolute;left:930.50px;top:264.10px;width:12.70px;height:174.50px;box-sizing:border-box;background:linear-gradient(180deg,#afffff 0%,#000 100%)"></div><svg style="position:absolute;left:943px;top:296px" width="6" height="10"><path d="M5.5 0.5V9.5L0.5 5Z" fill="#111"/></svg><div style="position:absolute;left:517.70px;top:460.60px;white-space:nowrap;font-family:'Liberation Sans', sans-serif;font-size:10.10px;letter-spacing:-0.33px;line-height:13px;color:#111;-webkit-text-stroke:0.2px #111;">Custom colors</div><div style="position:absolute;left:519.70px;top:480.70px;width:19.50px;height:16.00px;box-sizing:border-box;background:#4e79a7;border:1px solid #a6a6a6;box-shadow:0 0 0 1px #dedede"></div><div style="position:absolute;left:544.30px;top:480.70px;width:19.50px;height:16.00px;box-sizing:border-box;background:#9c832c;border:1px solid #a6a6a6;box-shadow:0 0 0 1px #dedede"></div><div style="position:absolute;left:568.50px;top:480.70px;width:19.50px;height:16.00px;box-sizing:border-box;background:#85c77a;border:1px solid #a6a6a6;box-shadow:0 0 0 1px #dedede"></div><div style="position:absolute;left:593.10px;top:480.70px;width:19.50px;height:16.00px;box-sizing:border-box;background:#8a8ba8;border:1px solid #a6a6a6;box-shadow:0 0 0 1px #dedede"></div><div style="position:absolute;left:617.70px;top:480.70px;width:19.50px;height:16.00px;box-sizing:border-box;background:#8de2d6;border:1px solid #a6a6a6;box-shadow:0 0 0 1px #dedede"></div><div style="position:absolute;left:642.00px;top:480.70px;width:19.50px;height:16.00px;box-sizing:border-box;background:#f22a60;border:1px solid #a6a6a6;box-shadow:0 0 0 1px #dedede"></div><div style="position:absolute;left:666.60px;top:480.70px;width:19.50px;height:16.00px;box-sizing:border-box;background:#5aa3a4;border:1px solid #a6a6a6;box-shadow:0 0 0 1px #dedede"></div><div style="position:absolute;left:690.50px;top:480.70px;width:19.50px;height:16.00px;box-sizing:border-box;background:#3a4575;border:1px solid #a6a6a6;box-shadow:0 0 0 1px #dedede"></div><div style="position:absolute;left:519.70px;top:501.50px;width:19.50px;height:16.00px;box-sizing:border-box;background:#f22a60;border:1px solid #a6a6a6;box-shadow:0 0 0 1px #dedede"></div><div style="position:absolute;left:544.30px;top:501.50px;width:19.50px;height:16.00px;box-sizing:border-box;background:#ff5a00;border:1px solid #a6a6a6;box-shadow:0 0 0 1px #dedede"></div><div style="position:absolute;left:568.50px;top:501.50px;width:19.50px;height:16.00px;box-sizing:border-box;background:#4f9b4a;border:1px solid #a6a6a6;box-shadow:0 0 0 1px #dedede"></div><div style="position:absolute;left:593.10px;top:501.50px;width:19.50px;height:16.00px;box-sizing:border-box;background:#ffa11f;border:1px solid #a6a6a6;box-shadow:0 0 0 1px #dedede"></div><div style="position:absolute;left:617.70px;top:501.50px;width:19.50px;height:16.00px;box-sizing:border-box;background:#1d9bb0;border:1px solid #a6a6a6;box-shadow:0 0 0 1px #dedede"></div><div style="position:absolute;left:642.00px;top:501.50px;width:19.50px;height:16.00px;box-sizing:border-box;background:#5cd8c7;border:1px solid #a6a6a6;box-shadow:0 0 0 1px #dedede"></div><div style="position:absolute;left:666.60px;top:501.50px;width:19.50px;height:16.00px;box-sizing:border-box;background:#5aa3a4;border:1px solid #a6a6a6;box-shadow:0 0 0 1px #dedede"></div><div style="position:absolute;left:690.50px;top:501.50px;width:19.50px;height:16.00px;box-sizing:border-box;background:#0000f5;border:1px solid #a6a6a6;box-shadow:0 0 0 1px #dedede"></div><div style="position:absolute;left:519.00px;top:526.40px;width:192.40px;height:17.80px;box-sizing:border-box;background:#fbfbfb;border:1px solid #d6d6d6;border-bottom-color:#c4c4c4;border-radius:4px"></div><div style="position:absolute;left:515.20px;top:528.78px;width:200px;text-align:center;white-space:nowrap;font-family:'Liberation Sans', sans-serif;font-size:10.15px;letter-spacing:-0.33px;line-height:13px;color:#1a1a1a;">Add to Custom Colors</div><div style="position:absolute;left:723.70px;top:458.70px;width:51.10px;height:86.00px;box-sizing:border-box;background:#8ac8c9"></div><div style="position:absolute;left:618.40px;top:460.04px;width:200px;text-align:right;white-space:nowrap;font-family:'Liberation Sans', sans-serif;font-size:10.26px;letter-spacing:-0.33px;line-height:13px;color:#111;-webkit-text-stroke:0.2px #111;">Hue:</div><div style="position:absolute;left:824.70px;top:459.10px;width:36.10px;height:15.00px;box-sizing:border-box;background:#fff;border-bottom:1px solid #8f8f8f"></div><div style="position:absolute;left:827.70px;top:460.11px;white-space:nowrap;font-family:'Liberation Sans', sans-serif;font-size:10.37px;letter-spacing:-0.34px;line-height:13px;color:#1a1a1a;">180</div><div style="position:absolute;left:847.30px;top:460.10px;width:12.50px;height:13.00px;box-sizing:border-box;background:#f3f3f3;border:1px solid #d0d0d0;border-radius:2px"></div><svg style="position:absolute;left:849.8px;top:459.6px" width="8" height="14"><path d="M1.3 5L4 2.2L6.7 5Z" fill="#222"/><path d="M1.3 9L4 11.8L6.7 9Z" fill="#222"/><rect x="1" y="6.6" width="6" height="0.8" fill="#bbb"/></svg><div style="position:absolute;left:618.40px;top:482.04px;width:200px;text-align:right;white-space:nowrap;font-family:'Liberation Sans', sans-serif;font-size:10.26px;letter-spacing:-0.33px;line-height:13px;color:#111;-webkit-text-stroke:0.2px #111;">Sat:</div><div style="position:absolute;left:824.70px;top:481.10px;width:36.10px;height:15.00px;box-sizing:border-box;background:#fff;border-bottom:1px solid #8f8f8f"></div><div style="position:absolute;left:827.70px;top:482.11px;white-space:nowrap;font-family:'Liberation Sans', sans-serif;font-size:10.37px;letter-spacing:-0.34px;line-height:13px;color:#1a1a1a;">80</div><div style="position:absolute;left:847.30px;top:482.10px;width:12.50px;height:13.00px;box-sizing:border-box;background:#f3f3f3;border:1px solid #d0d0d0;border-radius:2px"></div><svg style="position:absolute;left:849.8px;top:481.6px" width="8" height="14"><path d="M1.3 5L4 2.2L6.7 5Z" fill="#222"/><path d="M1.3 9L4 11.8L6.7 9Z" fill="#222"/><rect x="1" y="6.6" width="6" height="0.8" fill="#bbb"/></svg><div style="position:absolute;left:618.40px;top:503.74px;width:200px;text-align:right;white-space:nowrap;font-family:'Liberation Sans', sans-serif;font-size:10.26px;letter-spacing:-0.33px;line-height:13px;color:#111;-webkit-text-stroke:0.2px #111;">Val:</div><div style="position:absolute;left:824.70px;top:502.80px;width:36.10px;height:15.00px;box-sizing:border-box;background:#fff;border-bottom:1px solid #8f8f8f"></div><div style="position:absolute;left:827.70px;top:503.81px;white-space:nowrap;font-family:'Liberation Sans', sans-serif;font-size:10.37px;letter-spacing:-0.34px;line-height:13px;color:#1a1a1a;">201</div><div style="position:absolute;left:847.30px;top:503.80px;width:12.50px;height:13.00px;box-sizing:border-box;background:#f3f3f3;border:1px solid #d0d0d0;border-radius:2px"></div><svg style="position:absolute;left:849.8px;top:503.29999999999995px" width="8" height="14"><path d="M1.3 5L4 2.2L6.7 5Z" fill="#222"/><path d="M1.3 9L4 11.8L6.7 9Z" fill="#222"/><rect x="1" y="6.6" width="6" height="0.8" fill="#bbb"/></svg><div style="position:absolute;left:705.00px;top:460.04px;width:200px;text-align:right;white-space:nowrap;font-family:'Liberation Sans', sans-serif;font-size:10.26px;letter-spacing:-0.33px;line-height:13px;color:#111;-webkit-text-stroke:0.2px #111;">Red:</div><div style="position:absolute;left:911.40px;top:459.10px;width:35.40px;height:15.00px;box-sizing:border-box;background:#fff;border-bottom:1px solid #8f8f8f"></div><div style="position:absolute;left:914.40px;top:460.11px;white-space:nowrap;font-family:'Liberation Sans', sans-serif;font-size:10.37px;letter-spacing:-0.34px;line-height:13px;color:#1a1a1a;">138</div><div style="position:absolute;left:933.30px;top:460.10px;width:12.50px;height:13.00px;box-sizing:border-box;background:#f3f3f3;border:1px solid #d0d0d0;border-radius:2px"></div><svg style="position:absolute;left:935.8px;top:459.6px" width="8" height="14"><path d="M1.3 5L4 2.2L6.7 5Z" fill="#222"/><path d="M1.3 9L4 11.8L6.7 9Z" fill="#222"/><rect x="1" y="6.6" width="6" height="0.8" fill="#bbb"/></svg><div style="position:absolute;left:705.00px;top:482.04px;width:200px;text-align:right;white-space:nowrap;font-family:'Liberation Sans', sans-serif;font-size:10.26px;letter-spacing:-0.33px;line-height:13px;color:#111;-webkit-text-stroke:0.2px #111;">Green:</div><div style="position:absolute;left:911.40px;top:481.10px;width:35.40px;height:15.00px;box-sizing:border-box;background:#fff;border-bottom:1px solid #8f8f8f"></div><div style="position:absolute;left:914.40px;top:482.11px;white-space:nowrap;font-family:'Liberation Sans', sans-serif;font-size:10.37px;letter-spacing:-0.34px;line-height:13px;color:#1a1a1a;">200</div><div style="position:absolute;left:933.30px;top:482.10px;width:12.50px;height:13.00px;box-sizing:border-box;background:#f3f3f3;border:1px solid #d0d0d0;border-radius:2px"></div><svg style="position:absolute;left:935.8px;top:481.6px" width="8" height="14"><path d="M1.3 5L4 2.2L6.7 5Z" fill="#222"/><path d="M1.3 9L4 11.8L6.7 9Z" fill="#222"/><rect x="1" y="6.6" width="6" height="0.8" fill="#bbb"/></svg><div style="position:absolute;left:705.00px;top:503.74px;width:200px;text-align:right;white-space:nowrap;font-family:'Liberation Sans', sans-serif;font-size:10.26px;letter-spacing:-0.33px;line-height:13px;color:#111;-webkit-text-stroke:0.2px #111;">Blue:</div><div style="position:absolute;left:911.40px;top:502.80px;width:35.40px;height:15.00px;box-sizing:border-box;background:#fff;border-bottom:1px solid #8f8f8f"></div><div style="position:absolute;left:914.40px;top:503.81px;white-space:nowrap;font-family:'Liberation Sans', sans-serif;font-size:10.37px;letter-spacing:-0.34px;line-height:13px;color:#1a1a1a;">201</div><div style="position:absolute;left:933.30px;top:503.80px;width:12.50px;height:13.00px;box-sizing:border-box;background:#f3f3f3;border:1px solid #d0d0d0;border-radius:2px"></div><svg style="position:absolute;left:935.8px;top:503.29999999999995px" width="8" height="14"><path d="M1.3 5L4 2.2L6.7 5Z" fill="#222"/><path d="M1.3 9L4 11.8L6.7 9Z" fill="#222"/><rect x="1" y="6.6" width="6" height="0.8" fill="#bbb"/></svg><div style="position:absolute;left:618.40px;top:530.74px;width:200px;text-align:right;white-space:nowrap;font-family:'Liberation Sans', sans-serif;font-size:10.26px;letter-spacing:-0.33px;line-height:13px;color:#111;-webkit-text-stroke:0.2px #111;">HTML:</div><div style="position:absolute;left:824.70px;top:529.00px;width:99.20px;height:16.30px;box-sizing:border-box;background:#fff;border-bottom:1px solid #9a9a9a"></div><div style="position:absolute;left:827.50px;top:530.78px;white-space:nowrap;font-family:'Liberation Sans', sans-serif;font-size:10.15px;letter-spacing:-0.33px;line-height:13px;color:#111;-webkit-text-stroke:0.2px #111;">#8ac8c9</div><div style="position:absolute;left:818.40px;top:556.60px;width:63.10px;height:18.70px;box-sizing:border-box;background:#fbfbfb;border:1px solid #d6d6d6;border-bottom-color:#c4c4c4;border-radius:4px"></div><div style="position:absolute;left:749.95px;top:559.43px;width:200px;text-align:center;white-space:nowrap;font-family:'Liberation Sans', sans-serif;font-size:10.15px;letter-spacing:-0.33px;line-height:13px;color:#1a1a1a;">OK</div><div style="position:absolute;left:888.70px;top:556.60px;width:63.60px;height:18.70px;box-sizing:border-box;background:#fbfbfb;border:1px solid #d6d6d6;border-bottom-color:#c4c4c4;border-radius:4px"></div><div style="position:absolute;left:820.50px;top:559.43px;width:200px;text-align:center;white-space:nowrap;font-family:'Liberation Sans', sans-serif;font-size:10.15px;letter-spacing:-0.33px;line-height:13px;color:#1a1a1a;">Cancel</div><svg style="position:absolute;left:0;top:0;mix-blend-mode:multiply" width="1023" height="613"><g fill="#fff500"><path fill-rule="evenodd" d="M498 190C497 181 507 179 516 179C526 179 532 181 532.5 190L532.5 226C532.5 232 528 233.5 521 233C514 232.5 509 231 505 228C501 225 498.5 222 498 216Z M502 199C502.5 192 509 190.5 516 190.5L528 191L528 215.1C522 213.5 518 212.2 514.5 211.8C509 211.2 505.5 211 504.5 210.5C503 209.8 502.3 209 502 207.5Z"/><path d="M285.8 374.8L323.3 382.6L323.3 392.5L285.8 384.2Z"/><path d="M449 317L507 321L507 329.3L449 327.4Z"/><path d="M821.7 537.6L889.5 538.5L889.5 547.8L821.7 546.8Z"/><path d="M1001 89.5C1008 90 1015 91 1021.5 92.5L1023 102.8C1015 101.5 1008 100 1000.5 98.5Z"/></g></svg>
</body></html>
